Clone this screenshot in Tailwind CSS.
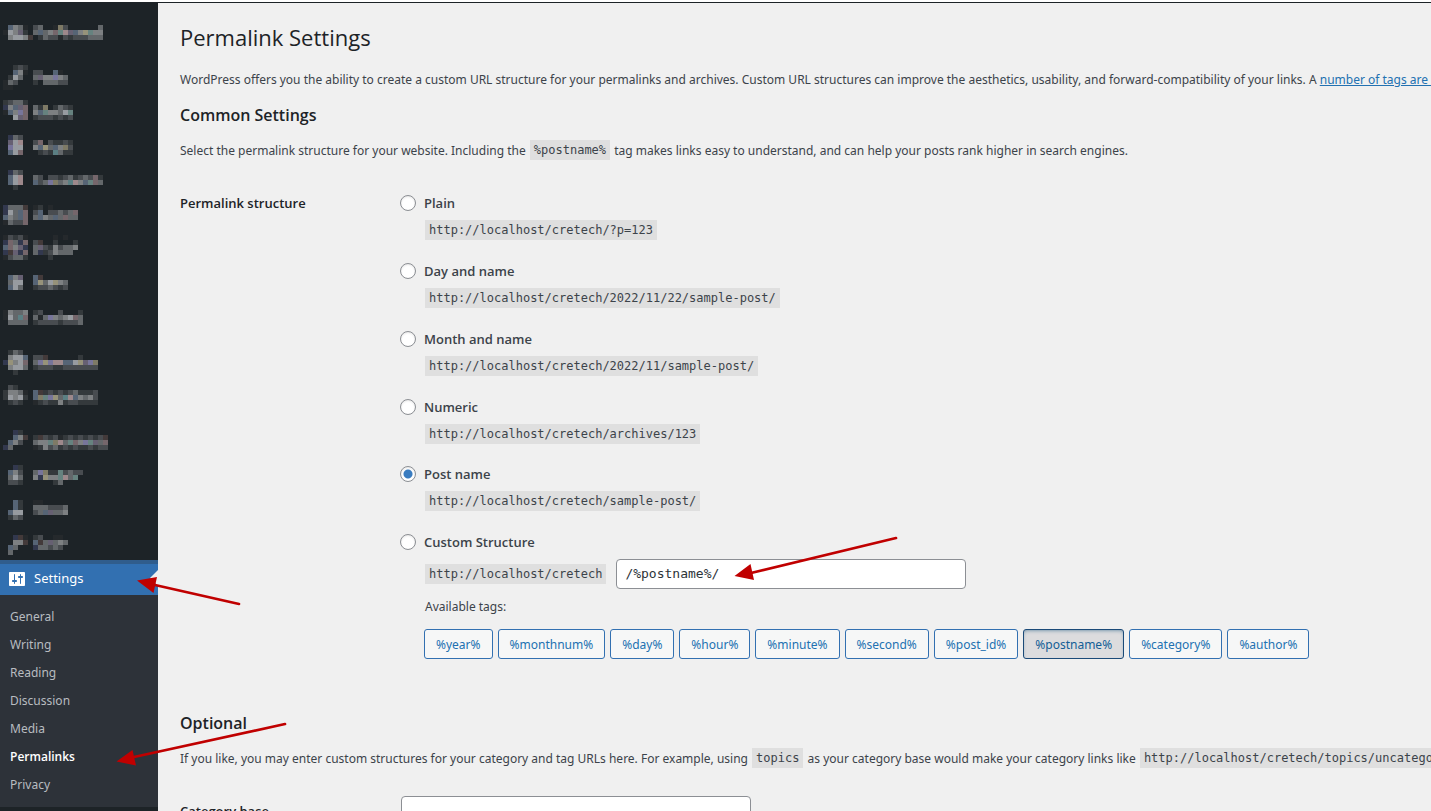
<!DOCTYPE html>
<html lang="en">

<head>
    <meta charset="UTF-8">
    <title>Permalink Settings</title>
    <script src="https://cdn.jsdelivr.net/npm/@tailwindcss/browser@4"></script>
</head>

<body class="h-screen overflow-hidden bg-white pt-0.5 font-['Noto_Sans','Open_Sans',sans-serif] text-xs text-[#3c434a]">

    <div class="relative flex min-h-full">

        <!-- Admin Menu -->
        <nav class="w-[158px] shrink-0 bg-[#1d2327] pt-[23px]">
            <ul id="hiddenMenu" class="pl-[3px] pb-[5px]" aria-hidden="true"></ul>

            <a href="#" class="relative flex h-[35px] items-center gap-[7px] border-t-4 border-[#305d8c] bg-[#3270b1] pb-0.5 pl-[7px] text-[13px] text-white">
                <svg class="size-5" viewBox="0 0 20 20" fill="currentColor">
                    <path d="M18 16V4c0-.55-.45-1-1-1H3c-.55 0-1 .45-1 1v12c0 .55.45 1 1 1h14c.55 0 1-.45 1-1zM8 11h1c.55 0 1 .45 1 1s-.45 1-1 1H8v1.5c0 .28-.22.5-.5.5s-.5-.22-.5-.5V13H6c-.55 0-1-.45-1-1s.45-1 1-1h1V5.5c0-.28.22-.5.5-.5s.5.22.5.5V11zm5-2h-1c-.55 0-1-.45-1-1s.45-1 1-1h1V5.5c0-.28.22-.5.5-.5s.5.22.5.5V7h1c.55 0 1 .45 1 1s-.45 1-1 1h-1v5.5c0 .28-.22.5-.5.5s-.5-.22-.5-.5V9z" />
                </svg>
                Settings
                <svg class="absolute right-0 top-1.5 h-4 w-2" viewBox="0 0 8 16" fill="#f0f0f0"><path d="M8 0v16L0 8z" /></svg>
            </a>

            <ul class="bg-[#2d3239] pb-2 pl-2.5 pt-2 text-[#b8bcc0]">
                <li><a href="#" class="block leading-7">General</a></li>
                <li><a href="#" class="block leading-7">Writing</a></li>
                <li><a href="#" class="block leading-7">Reading</a></li>
                <li><a href="#" class="block leading-7">Discussion</a></li>
                <li><a href="#" class="block leading-7">Media</a></li>
                <li><a href="#" class="block font-['Open_Sans',sans-serif] font-semibold leading-7 text-white">Permalinks</a></li>
                <li><a href="#" class="block leading-7">Privacy</a></li>
            </ul>
        </nav>

        <!-- Page Content -->
        <main class="min-w-0 flex-1 overflow-hidden whitespace-nowrap border-t border-[#1d2327] bg-[#f0f0f0] pl-[22px] pt-5">
            <h1 class="font-['Open_Sans',sans-serif] text-[22px] leading-7 text-[#1d2327]">Permalink Settings</h1>
            <p class="mt-[18px] leading-[22px]">WordPress offers you the ability to create a custom URL structure for your permalinks and archives. Custom URL structures can improve the aesthetics, usability, and forward-compatibility of your links. A <a href="#" class="text-[#2271b1] underline">number of tags are available</a></p>

            <h2 class="mt-3 font-['Open_Sans',sans-serif] text-base font-semibold leading-6 text-[#1d2327]">Common Settings</h2>
            <p class="mt-[13px] leading-[22px]">Select the permalink structure for your website. Including the <code class="mx-px inline-block bg-[#dfdfdf] px-1 align-top font-['DejaVu_Sans_Mono',monospace] leading-5">%postname%</code> tag makes links easy to understand, and can help your posts rank higher in search engines.</p>

            <form>
                <fieldset class="mt-[29px] grid grid-cols-[220px_1fr]" aria-labelledby="structureTitle">
                    <div id="structureTitle" class="font-['Open_Sans',sans-serif] text-[13px] font-semibold leading-6 text-[#1d2327]">Permalink structure</div>
                    <div>
                        <div class="mb-[19px]">
                            <label class="flex items-center gap-2 font-['Open_Sans',sans-serif] text-[13px] font-semibold leading-6">
                                <input type="radio" name="structure" class="size-4 appearance-none rounded-full border border-[#8c8f94] bg-white bg-clip-padding shadow-[inset_0_1px_2px_rgba(0,0,0,0.1)] checked:bg-[radial-gradient(#3a7cc0_4px,#fff_5px)]">Plain
                            </label>
                            <code class="ml-[25px] mt-[5px] block w-fit bg-[#dfdfdf] px-1 font-['DejaVu_Sans_Mono',monospace] leading-5">http://localhost/cretech/?p=123</code>
                        </div>
                        <div class="mb-[19px]">
                            <label class="flex items-center gap-2 font-['Open_Sans',sans-serif] text-[13px] font-semibold leading-6">
                                <input type="radio" name="structure" class="size-4 appearance-none rounded-full border border-[#8c8f94] bg-white bg-clip-padding shadow-[inset_0_1px_2px_rgba(0,0,0,0.1)] checked:bg-[radial-gradient(#3a7cc0_4px,#fff_5px)]">Day and name
                            </label>
                            <code class="ml-[25px] mt-[5px] block w-fit bg-[#dfdfdf] px-1 font-['DejaVu_Sans_Mono',monospace] leading-5">http://localhost/cretech/2022/11/22/sample-post/</code>
                        </div>
                        <div class="mb-[19px]">
                            <label class="flex items-center gap-2 font-['Open_Sans',sans-serif] text-[13px] font-semibold leading-6">
                                <input type="radio" name="structure" class="size-4 appearance-none rounded-full border border-[#8c8f94] bg-white bg-clip-padding shadow-[inset_0_1px_2px_rgba(0,0,0,0.1)] checked:bg-[radial-gradient(#3a7cc0_4px,#fff_5px)]">Month and name
                            </label>
                            <code class="ml-[25px] mt-[5px] block w-fit bg-[#dfdfdf] px-1 font-['DejaVu_Sans_Mono',monospace] leading-5">http://localhost/cretech/2022/11/sample-post/</code>
                        </div>
                        <div class="mb-[18px]">
                            <label class="flex items-center gap-2 font-['Open_Sans',sans-serif] text-[13px] font-semibold leading-6">
                                <input type="radio" name="structure" class="size-4 appearance-none rounded-full border border-[#8c8f94] bg-white bg-clip-padding shadow-[inset_0_1px_2px_rgba(0,0,0,0.1)] checked:bg-[radial-gradient(#3a7cc0_4px,#fff_5px)]">Numeric
                            </label>
                            <code class="ml-[25px] mt-[5px] block w-fit bg-[#dfdfdf] px-1 font-['DejaVu_Sans_Mono',monospace] leading-5">http://localhost/cretech/archives/123</code>
                        </div>
                        <div class="mb-[19px]">
                            <label class="flex items-center gap-2 font-['Open_Sans',sans-serif] text-[13px] font-semibold leading-6">
                                <input type="radio" name="structure" checked class="size-4 appearance-none rounded-full border border-[#8c8f94] bg-white bg-clip-padding shadow-[inset_0_1px_2px_rgba(0,0,0,0.1)] checked:bg-[radial-gradient(#3a7cc0_4px,#fff_5px)]">Post name
                            </label>
                            <code class="ml-[25px] mt-[5px] block w-fit bg-[#dfdfdf] px-1 font-['DejaVu_Sans_Mono',monospace] leading-5">http://localhost/cretech/sample-post/</code>
                        </div>
                        <div>
                            <label class="flex items-center gap-2 font-['Open_Sans',sans-serif] text-[13px] font-semibold leading-6">
                                <input type="radio" name="structure" class="size-4 appearance-none rounded-full border border-[#8c8f94] bg-white bg-clip-padding shadow-[inset_0_1px_2px_rgba(0,0,0,0.1)] checked:bg-[radial-gradient(#3a7cc0_4px,#fff_5px)]">Custom Structure
                            </label>
                            <div class="ml-[25px] mt-[5px] flex items-center gap-2.5">
                                <code class="bg-[#dfdfdf] px-1 font-['DejaVu_Sans_Mono',monospace] leading-5">http://localhost/cretech</code>
                                <input type="text" value="/%postname%/" aria-label="Custom Structure" class="h-[30px] w-[350px] rounded border border-[#8c8f94] bg-white px-2 pb-0.5 font-['DejaVu_Sans_Mono',monospace] text-[13px] text-[#2c3338]">
                            </div>
                            <p class="ml-[25px] mt-[7px] leading-[22px]">Available tags:</p>
                            <div class="ml-6 mt-[11px] flex gap-[5px] text-[#2271b1]">
                                <button type="button" class="h-[30px] rounded-[3px] border border-[#3270b1] bg-[#f6f7f7] px-[11px] pt-0.5">%year%</button>
                                <button type="button" class="h-[30px] rounded-[3px] border border-[#3270b1] bg-[#f6f7f7] px-[11px] pt-0.5">%monthnum%</button>
                                <button type="button" class="h-[30px] rounded-[3px] border border-[#3270b1] bg-[#f6f7f7] px-[11px] pt-0.5">%day%</button>
                                <button type="button" class="h-[30px] rounded-[3px] border border-[#3270b1] bg-[#f6f7f7] px-[11px] pt-0.5">%hour%</button>
                                <button type="button" class="h-[30px] rounded-[3px] border border-[#3270b1] bg-[#f6f7f7] px-[11px] pt-0.5">%minute%</button>
                                <button type="button" class="h-[30px] rounded-[3px] border border-[#3270b1] bg-[#f6f7f7] px-[11px] pt-0.5">%second%</button>
                                <button type="button" class="h-[30px] rounded-[3px] border border-[#3270b1] bg-[#f6f7f7] px-[11px] pt-0.5">%post_id%</button>
                                <button type="button" class="h-[30px] rounded-[3px] border border-[#1b4a78] bg-[#dcdcde] px-[11px] pt-0.5 text-[#135e96] shadow-[inset_0_2px_5px_-3px_#0a4b78]">%postname%</button>
                                <button type="button" class="h-[30px] rounded-[3px] border border-[#3270b1] bg-[#f6f7f7] px-[11px] pt-0.5">%category%</button>
                                <button type="button" class="h-[30px] rounded-[3px] border border-[#3270b1] bg-[#f6f7f7] px-[11px] pt-0.5">%author%</button>
                            </div>
                        </div>
                    </div>
                </fieldset>

                <h2 class="mt-[52px] font-['Open_Sans',sans-serif] text-base font-semibold leading-6 text-[#1d2327]">Optional</h2>
                <p class="mt-[13px] leading-[22px]">If you like, you may enter custom structures for your category and tag URLs here. For example, using <code class="mx-px inline-block bg-[#dfdfdf] px-1 align-top font-['DejaVu_Sans_Mono',monospace] leading-5">topics</code> as your category base would make your category links like <code class="mx-px inline-block bg-[#dfdfdf] px-1 align-top font-['DejaVu_Sans_Mono',monospace] leading-5">http://localhost/cretech/topics/uncategorized/</code></p>

                <div class="mt-[26px] grid grid-cols-[221px_350px] items-center">
                    <label for="categoryBase" class="font-['Open_Sans',sans-serif] text-[13px] font-semibold leading-6 text-[#1d2327]">Category base</label>
                    <input id="categoryBase" type="text" class="h-[30px] rounded border border-[#8c8f94] bg-white px-2">
                </div>
            </form>
        </main>

        <!-- Arrows drawn over the page -->
        <svg class="pointer-events-none absolute left-0 top-0" width="1000" height="800" viewBox="0 2 1000 800" fill="#c00000" stroke="#c00000" stroke-width="2.7" stroke-linecap="round">
            <path d="M239 604L155 585M285 724L134 757M896 538L751 573" />
            <path stroke="none" d="M137 580.500L157 577L153.500 593zM116.500 761.500L132.500 750L136 765.500zM734.500 576L750.500 564L754 580z" />
        </svg>
    </div>

    <script>
        // Pixelated menu entries: one character per 5px cell
        const colors = {
            a: '#25292c', b: '#34393c', c: '#484c50', d: '#63676a', e: '#7d8082', f: '#979ba0',
            N: '#32384e', B: '#566475', P: '#77759a', p: '#666072', r: '#75666b', R: '#9d888b',
            t: '#66827f', T: '#5b7f83', o: '#7e7a66', O: '#96927a', x: '#433a3a'
        };

        const menu = [
            ['.Beda.cd..aoc......d', 'afepb.dBdertRpBeOtee', '.effex.bdccacbcccddd', '', '', '', '', ''],
            ['..bcb', '..Bea.cc..Ba', '.bfd..dpeePed', 'adc...b.dddcc', 'aa', '', ''],
            ['bcddb', 'NeBpr.dbo.bdcb', 'aBePr.eBteedft', '..fpr.bcccbcbc', '', '', ''],
            ['.Ndc', '.pfR..cr.cbbcb', '.Pff..eBOdBeoc', '.Bfr...bcbTdbb', '', '', ''],
            ['.Ndc', '.BfR..dc.ccbcdbcdcrb', '.BfR..BcdPodeTReBtrd', '..b', '', '', ''],
            ['Ndddx.ab.a', 'NfdBr.cB.ccdcdr', 'BedBr.dBedBdrdd', 'adccr', '', ''],
            ['acbca.....a.a', 'NrdNr.cx..b...b', 'BrepN.dpcbecdde', 'NxpNr.dNbceddd', 'acddb....b', '', '', ''],
            ['.Bep..Bx', '.dff..BOdfOed', '.Bfd..bccdcbc', '', '', '', ''],
            ['aedde.bc...c...b', 'afdTr.dadPedefrd', '.dddd.bccccbcccd', '', '', '', '', ''],
            ['.bdc', '.effB.ccx......b', 'NOefr.dPOPRRBBfOpPo', '.effd.bcccbbccccccc', '..b', '', ''],
            ['.cb', 'beeda.Bxbcbcbcdbbbc', 'bfefb.BotPOdTRBedec', '.bcb..abcbbebccbbbb', '', '', '', '', ''],
            ['..Nb', '..Bex.bxcbcabcbcbcbcx', '.Bec..deetoRdtrePtpdr', 'Nd....abecdbcbcbbcbcc', '', '', ''],
            ['..Nb', '.Bec..dPobbtcdcc', '.dfd..eNOeetRdt', '.ccb......bd', '', '', ''],
            ['..Bb..aa', '..Bb..dddcccd', '.Bff..cdBpdde', '.bdc', '', '', ''],
            ['..Nxa.bc..aa', '..eex.Bxdpded', '.Bd...Nddcdc', '.d']
        ];

        document.getElementById('hiddenMenu').innerHTML = menu.map((rows) => {
            let cells = '';
            rows.forEach((row, y) => {
                [...row].forEach((key, x) => {
                    if (colors[key]) cells += `<rect x="${x * 5}" y="${y * 5}" width="5" height="5" fill="${colors[key]}"/>`;
                });
            });
            return `<li><svg class="block" width="110" height="${rows.length * 5}">${cells}</svg></li>`;
        }).join('');
    </script>
</body>

</html>
